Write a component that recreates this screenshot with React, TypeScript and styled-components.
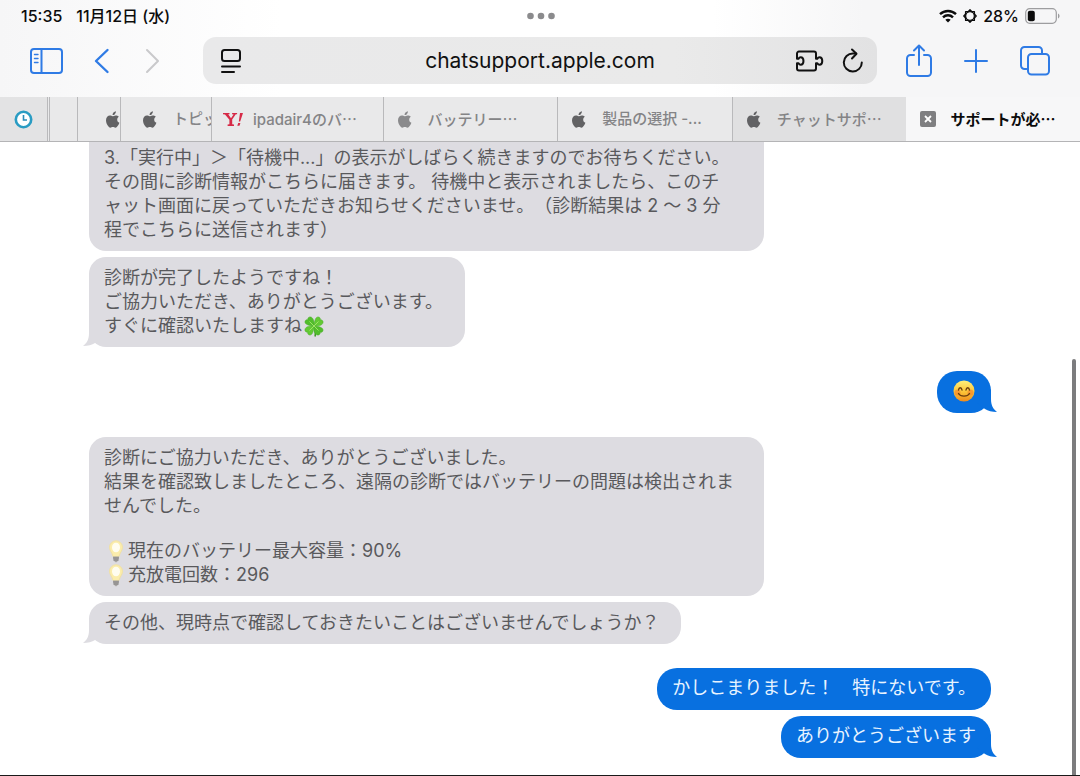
import React, { type ReactNode } from "react";
import styled, { createGlobalStyle, css } from "styled-components";

const GlobalStyle = createGlobalStyle`
  * { box-sizing: border-box; }
  html, body { margin: 0; }
  body {
    font-family: Inter, "Noto Sans CJK JP", sans-serif;
    color: #0c0c0c;
    background: #fff;
  }
  button { border: 0; padding: 0; background: none; font: inherit; color: inherit; display: flex; }
  svg { display: block; flex: none; }
`;

const Screen = styled.div`
  height: 100vh;
  display: flex;
  flex-direction: column;
  overflow: hidden;
  border-bottom: 1px solid #1a1a1a;
`;

const Chrome = styled.header`
  flex: none;
  background: linear-gradient(90deg, #f6f6f7 0%, #fff 26%, #fff 66%, #f6f6f7 80%);
  border-bottom: 1px solid #b4b4b6;
`;

const StatusBar = styled.div`
  height: 32px;
  padding: 0 20px 0 21px;
  display: grid;
  grid-template-columns: 1fr auto 1fr;
  align-items: center;
  font-size: 16px;
  line-height: 20px;
  font-weight: 500;
`;

const StatusLeft = styled.div`
  display: flex;
  align-items: baseline;
  gap: 14px;
  white-space: nowrap;
`;

const StatusRight = styled.div`
  display: flex;
  justify-content: flex-end;
  align-items: center;
  gap: 6px;
`;

const Toolbar = styled.nav`
  height: 65px;
  padding: 5px 29px 13px 28px;
  display: flex;
  align-items: center;
  color: #2f7be5;
`;

const NavButtons = styled.div`
  width: 175px;
  display: flex;
  align-items: center;
`;

const NavButton = styled.button<{ $width: number; $muted?: boolean }>`
  width: ${(p) => p.$width}px;
  color: ${(p) => (p.$muted ? "#c9c9cb" : "inherit")};
`;

const AddressBar = styled.div`
  flex: 1;
  height: 47px;
  padding: 0 12px 0 16px;
  display: flex;
  align-items: center;
  gap: 16px;
  border-radius: 13px;
  background: linear-gradient(90deg, #e9e9ea 0%, #eaeaea 70%, #e2e2e3 100%);
  color: #111;
`;

const AddressInput = styled.input`
  flex: 1;
  min-width: 0;
  padding: 0 0 0 42px;
  border: 0;
  outline: 0;
  background: none;
  font: 400 21px Inter, sans-serif;
  color: #111;
  text-align: center;
`;

const ActionButtons = styled.div`
  width: 174px;
  display: flex;
  align-items: center;
  justify-content: space-between;
  padding-left: 28px;
`;

const TabStrip = styled.div`
  height: 44px;
  display: flex;
`;

const Tab = styled.button<{ $width?: number; $active?: boolean; $shade?: string; $pad?: number }>`
  ${(p) => (p.$width ? css`flex: none; width: ${p.$width}px;` : css`flex: 1 1 0; min-width: 0;`)}
  padding-left: ${(p) => p.$pad ?? 14}px;
  align-items: center;
  gap: 10px;
  overflow: hidden;
  white-space: nowrap;
  font-size: 15px;
  line-height: 20px;
  font-weight: ${(p) => (p.$active ? 700 : 500)};
  color: ${(p) => (p.$active ? "#0c0c0c" : "#848486")};
  background: ${(p) => (p.$active ? "#f7f7f8" : p.$shade ?? "#e9e9ea")};
  border-right: ${(p) => (p.$active || p.$shade === "#e0e0e1" ? 0 : 1)}px solid #b9b9bb;
`;

const Favicon = styled.span`
  flex: none;
  width: 20px;
`;

const TabTitle = styled.span`
  flex: 1;
  min-width: 0;
  overflow: hidden;
  text-align: left;
`;

const WideDots = styled.span`
  font-family: "Noto Sans CJK JP", sans-serif;
`;

const PageArea = styled.main`
  flex: 1;
  min-height: 0;
  display: flex;
  justify-content: flex-end;
`;

const Conversation = styled.section`
  flex: 1;
  min-width: 0;
  display: flex;
  flex-direction: column;
  justify-content: flex-end;
  gap: 24px;
  padding: 0 81px 17px 89px;
  overflow: hidden;
`;

const ScrollTrack = styled.div`
  flex: none;
  width: 8px;
  padding-top: 217px;
  display: flex;
`;

const ScrollThumb = styled.div`
  width: 4px;
  border-radius: 2px 2px 0 0;
  background: #7c7c7e;
`;

const MessageGroup = styled.div<{ $mine?: boolean }>`
  flex: none;
  display: flex;
  flex-direction: column;
  align-items: ${(p) => (p.$mine ? "flex-end" : "flex-start")};
  gap: 6px;
`;

const BubbleBody = styled.div<{ $mine?: boolean; $wide?: boolean }>`
  position: relative;
  width: ${(p) => (p.$wide ? "calc(75% - 2px)" : "auto")};
  padding: ${(p) => (p.$mine ? "8px 15px 10px" : "9px 22px 9px 15px")};
  display: flex;
  flex-direction: column;
  gap: 21px;
  border-radius: ${(p) => (p.$mine ? 20 : 17)}px;
  background: ${(p) => (p.$mine ? "#0870e0" : "#dddce1")};
  color: ${(p) => (p.$mine ? "#e9f4ff" : "#59595c")};
  font-size: 18px;
  line-height: 24px;
  text-spacing-trim: space-all;
`;

const Paragraph = styled.p`
  margin: 0;
  white-space: pre;
`;

const Tail = styled.svg<{ $mine?: boolean }>`
  position: absolute;
  bottom: 0;
  ${(p) => (p.$mine ? css`right: -6px;` : css`left: -6px; transform: scaleX(-1);`)}
`;

const EmojiSlot = styled.span`
  display: inline-flex;
  width: 24px;
  height: 24px;
  align-items: center;
  justify-content: center;
  vertical-align: top;
`;

function Bubble({ mine, wide, tail, children }: { mine?: boolean; wide?: boolean; tail?: boolean; children: ReactNode }) {
  return (
    <BubbleBody $mine={mine} $wide={wide}>
      {children}
      {tail && (
        <Tail $mine={mine} width="24" height="24" viewBox="0 0 24 24" aria-hidden="true">
          <path d="M18 0v10c0 6 2 10 6 13-5 0-9-1-12-3L4 14Z" fill={mine ? "#0870e0" : "#dddce1"} />
        </Tail>
      )}
    </BubbleBody>
  );
}

function Apple({ color = "#626264" }: { color?: string }) {
  return (
    <Favicon>
      <svg width="14" height="17" viewBox="0 0 14 17" fill={color} aria-hidden="true">
        <path d="M9.9 0.2c.1 1-.3 2-.9 2.700-.6.8-1.500 1.300-2.400 1.200-.1-1 .3-2 .9-2.600C8.100.8 9.100.3 9.900.2ZM12.900 5.800c-1.100.7-1.700 1.600-1.700 2.900 0 1.500.9 2.600 2.200 3.100-.3 1-.8 1.900-1.400 2.800-.8 1.200-1.500 2.100-2.600 2.100-1 0-1.300-.6-2.500-.6s-1.600.6-2.500.6c-1.100 0-1.900-1-2.700-2.200C.6 12.900 0 11 0 9.200c0-3 1.900-4.700 3.900-4.700 1.100 0 2 .7 2.700.7.600 0 1.700-.8 3-.8 1.300 0 2.500.5 3.300 1.400Z" />
      </svg>
    </Favicon>
  );
}

function Smile() {
  return (
    <svg width="22" height="22" viewBox="0 0 22 22" role="img" aria-label="笑顔">
      <defs>
        <linearGradient id="face" x1="0" y1="0" x2="0" y2="1">
          <stop offset="0" stopColor="#fff07a" /><stop offset=".55" stopColor="#fcc437" /><stop offset="1" stopColor="#ef8a1c" />
        </linearGradient>
      </defs>
      <circle cx="11" cy="11" r="10.500" fill="url(#face)" />
      <circle cx="4.500" cy="12.500" r="3" fill="#f47a2a" opacity=".55" />
      <circle cx="17.500" cy="12.500" r="3" fill="#f47a2a" opacity=".55" />
      <path d="M5.500 10c.5-3 3-3 3.500 0M13 10c.5-3 3-3 3.500 0M5.500 13.500c2 3.500 9 3.500 11 0" fill="none" stroke="#6b3d0c" strokeWidth="1.400" strokeLinecap="round" />
    </svg>
  );
}

function Clover() {
  const leaf = "M11 11C6 10.500 1.500 9.500 2 6.500c.3-1.800 2-2 2.800-1.700C4.500 3 6 1.500 7.800 2 10.500 2.800 11.500 7 11 11Z";
  return (
    <svg width="22" height="22" viewBox="0 0 22 22" role="img" aria-label="四つ葉">
      <path d="M11 11c1 4 2 7 1 10.500" stroke="#3f9a26" strokeWidth="1.600" fill="none" />
      {[0, 90, 180, 270].map((a) => (
        <path key={a} d={leaf} fill={a % 180 ? "#62c934" : "#52bd2c"} stroke="#45ab24" strokeWidth=".5" transform={`rotate(${a} 11 11)`} />
      ))}
      <path d="M6.500 6.500l9 9M15.500 6.500l-9 9" stroke="#a5e66b" strokeWidth=".9" />
    </svg>
  );
}

function Bulb() {
  return (
    <svg width="16" height="23" viewBox="0 0 16 23" role="img" aria-label="電球">
      <path d="M8 .8a6.500 6.500 0 0 1 6.500 6.500c0 3.500-2.700 5.200-3.500 9.200H5C4.200 12.500 1.500 10.800 1.500 7.300A6.500 6.500 0 0 1 8 .8Z" fill="#fbedac" stroke="#f1e1a4" />
      <ellipse cx="8" cy="7.500" rx="4" ry="4.800" fill="#fffdf0" />
      <path d="M5 16.500h6l-.5 4L8 22.500l-2.500-2Z" fill="#a9a7a3" />
      <path d="M5 18h6M5.500 20h5" stroke="#77767a" strokeWidth=".7" />
    </svg>
  );
}

const stroke = { fill: "none", stroke: "currentColor", strokeWidth: 2, strokeLinecap: "round", strokeLinejoin: "round" } as const;

export default function App() {
  return (
    <Screen>
      <GlobalStyle />
      <Chrome>
        <StatusBar>
          <StatusLeft><span>15:35</span><span>11月12日 (水)</span></StatusLeft>
          <svg width="28" height="8" viewBox="0 0 28 8" fill="#8b8b8d" aria-hidden="true">
            <circle cx="3.500" cy="4" r="3.300" /><circle cx="14" cy="4" r="3.300" /><circle cx="24.500" cy="4" r="3.300" />
          </svg>
          <StatusRight>
            <svg width="18" height="14" viewBox="0 0 18 14" {...stroke} strokeWidth={2.4} strokeLinecap="butt" aria-hidden="true">
              <path d="M1 5.200c4.500-4.300 11.500-4.300 16 0M4 8.300c2.800-2.700 7.200-2.700 10 0" />
              <path d="M9 13.500 6.300 10.800c1.500-1.400 3.900-1.400 5.400 0Z" fill="currentColor" stroke="none" />
            </svg>
            <svg width="14" height="14" viewBox="0 0 16 16" {...stroke} strokeWidth={1.5} aria-hidden="true">
              <circle cx="8" cy="8" r="5" strokeWidth="1.500" />
              {[0, 45, 90, 135, 180, 225, 270, 315].map((a) => (
                <path key={a} d="M5.800 3 8 .9 10.200 3" transform={`rotate(${a} 8 8)`} />
              ))}
            </svg>
            <span>28%</span>
            <svg width="35" height="16" viewBox="0 0 35 16" aria-hidden="true">
              <rect x=".7" y=".7" width="30.600" height="14.600" rx="4" fill="none" stroke="#9d9d9f" strokeWidth="1.200" />
              <rect x="2.800" y="2.800" width="7" height="10.400" rx="2" fill="#0c0c0c" />
              <path d="M33 5.500c2 .8 2 4.200 0 5Z" fill="#9d9d9f" />
            </svg>
          </StatusRight>
        </StatusBar>

        <Toolbar aria-label="ツールバー">
          <NavButtons>
            <NavButton $width={65} aria-label="サイドバー">
              <svg width="36" height="28" viewBox="0 0 36 28" {...stroke}>
                <rect x="3" y="2" width="31" height="24" rx="3" />
                <path d="M13.500 2v24" /><path d="M6.500 7.500h3.500M6.500 11.500h3.500M6.500 15.500h3.500" strokeWidth="1.400" />
              </svg>
            </NavButton>
            <NavButton $width={52} aria-label="戻る">
              <svg width="18" height="26" viewBox="0 0 18 26" {...stroke} strokeWidth={2.4}><path d="M14.500 2 3 13l11.500 11" /></svg>
            </NavButton>
            <NavButton $width={18} $muted aria-label="進む">
              <svg width="18" height="26" viewBox="0 0 18 26" {...stroke}><path d="m2 2 11 11L2 24" /></svg>
            </NavButton>
          </NavButtons>
          <AddressBar>
            <button aria-label="ページメニュー">
              <svg width="24" height="26" viewBox="0 0 24 26" {...stroke}>
                <rect x="3" y="2" width="18" height="11" rx="2.500" /><path d="M3 18.500h18M3 24h12" />
              </svg>
            </button>
            <AddressInput aria-label="アドレス" defaultValue="chatsupport.apple.com" />
            <button aria-label="機能拡張">
              <svg width="30" height="24" viewBox="0 0 30 24" {...stroke}>
                <path d="M4 2.500h15a2 2 0 0 1 2 2v5.300h1.300c.5-1 1.200-1.500 2.200-1.500 3.700 0 3.700 7.400 0 7.400-1 0-1.700-.5-2.200-1.500H21v5.300a2 2 0 0 1-2 2H4a2 2 0 0 1-2-2v-5.300h1.500c.5 1 1.300 1.500 2.200 1.500 3.700 0 3.700-7.400 0-7.400-.9 0-1.700.5-2.200 1.500H2V4.500a2 2 0 0 1 2-2Z" />
              </svg>
            </button>
            <button aria-label="再読み込み">
              <svg width="24" height="26" viewBox="0 0 24 26" {...stroke}>
                <path d="M20.800 14.500A9 9 0 1 1 12 5.500h3" /><path d="m11 1.500 4.500 4.200L11 10.500" />
              </svg>
            </button>
          </AddressBar>
          <ActionButtons>
            <button aria-label="共有">
              <svg width="28" height="34" viewBox="0 0 28 34" {...stroke}>
                <path d="M9 11H5.500A3.500 3.500 0 0 0 2 14.500v14A3.500 3.500 0 0 0 5.500 32h17a3.500 3.500 0 0 0 3.500-3.500v-14a3.500 3.500 0 0 0-3.500-3.500H19M14 21V2M9 6.500 14 1.500l5 5" />
              </svg>
            </button>
            <button aria-label="新規タブ">
              <svg width="24" height="24" viewBox="0 0 24 24" {...stroke}><path d="M12 1v22M1 12h22" /></svg>
            </button>
            <button aria-label="タブ一覧">
              <svg width="32" height="32" viewBox="0 0 32 32" {...stroke}>
                <path d="M7.500 24H5.500A3.500 3.500 0 0 1 2 20.500v-15A3.500 3.500 0 0 1 5.500 2h14A3.500 3.500 0 0 1 23 5.500V8" />
                <rect x="9" y="9" width="21" height="20.500" rx="3.500" />
              </svg>
            </button>
          </ActionButtons>
        </Toolbar>

        <TabStrip role="tablist">
          <Tab role="tab" $width={48} $shade="#e3e3e4" aria-label="時計">
            <svg width="19" height="19" viewBox="0 0 19 19">
              <circle cx="9.500" cy="9.500" r="7.700" fill="#fff" stroke="#2a9cc3" strokeWidth="2.600" />
              <path d="M9.500 5v5h3.500" fill="none" stroke="#2a8cb8" strokeWidth="1.600" />
            </svg>
          </Tab>
          <Tab role="tab" $width={2} $pad={0} aria-label="タブ" />
          <Tab role="tab" $width={28} $pad={0} aria-label="タブ" />
          <Tab role="tab" $width={43} $pad={28} aria-label="Apple"><Apple /></Tab>
          <Tab role="tab" $width={91} $pad={22}><Apple /><TabTitle>トピッ</TabTitle></Tab>
          <Tab role="tab" $pad={11}>
            <Favicon>
              <svg width="20" height="13" viewBox="0 0 20 13" fill="#d62a47" aria-hidden="true">
                <path d="M0 0h6.500v1.300H5.200L8 5.200l2.600-3.600-1.500-.3V0h5v1.300h-1.300L9.200 6.600v4.700l1.800.3V13H4.600v-1.400l1.800-.3V6.800L2 1.500 0 1.300ZM17 0h3l-2.800 8.500h-1.400ZM15.200 10h2.200l-.9 2.800h-2.200Z" />
              </svg>
            </Favicon>
            <TabTitle>ipadair4のバ<WideDots>…</WideDots></TabTitle>
          </Tab>
          <Tab role="tab"><Apple color="#8a8a8c" /><TabTitle>バッテリー<WideDots>…</WideDots></TabTitle></Tab>
          <Tab role="tab"><Apple /><TabTitle>製品の選択 -...</TabTitle></Tab>
          <Tab role="tab" $shade="#e0e0e1"><Apple /><TabTitle>チャットサポ<WideDots>…</WideDots></TabTitle></Tab>
          <Tab role="tab" $active aria-selected="true">
            <Favicon>
              <svg width="16" height="16" viewBox="0 0 16 16" aria-hidden="true">
                <rect width="16" height="16" rx="2" fill="#7f7f81" /><path d="m5 5 6 6m0-6-6 6" stroke="#fff" strokeWidth="1.800" />
              </svg>
            </Favicon>
            <TabTitle>サポートが必<WideDots>…</WideDots></TabTitle>
          </Tab>
        </TabStrip>
      </Chrome>

      <PageArea>
        <Conversation>
          <MessageGroup>
            <Bubble wide>
              <Paragraph>{"意する」を選択\n3.「実行中」＞「待機中...」の表示がしばらく続きますのでお待ちください。\nその間に診断情報がこちらに届きます。 待機中と表示されましたら、このチ\nャット画面に戻っていただきお知らせくださいませ。（診断結果は 2 〜 3 分\n程でこちらに送信されます）"}</Paragraph>
            </Bubble>
            <Bubble tail>
              <Paragraph>{"診断が完了したようですね！\nご協力いただき、ありがとうございます。\nすぐに確認いたしますね"}<EmojiSlot><Clover /></EmojiSlot></Paragraph>
            </Bubble>
          </MessageGroup>
          <MessageGroup $mine>
            <Bubble mine tail><EmojiSlot><Smile /></EmojiSlot></Bubble>
          </MessageGroup>
          <MessageGroup>
            <Bubble wide>
              <Paragraph>{"診断にご協力いただき、ありがとうございました。\n結果を確認致しましたところ、遠隔の診断ではバッテリーの問題は検出されま\nせんでした。"}</Paragraph>
              <Paragraph>
                <EmojiSlot><Bulb /></EmojiSlot>{"現在のバッテリー最大容量：90%\n"}
                <EmojiSlot><Bulb /></EmojiSlot>充放電回数：296
              </Paragraph>
            </Bubble>
            <Bubble tail><Paragraph>その他、現時点で確認しておきたいことはございませんでしょうか？</Paragraph></Bubble>
          </MessageGroup>
          <MessageGroup $mine>
            <Bubble mine><Paragraph>かしこまりました！　特にないです。</Paragraph></Bubble>
            <Bubble mine tail><Paragraph>ありがとうございます</Paragraph></Bubble>
          </MessageGroup>
        </Conversation>
        <ScrollTrack><ScrollThumb /></ScrollTrack>
      </PageArea>
    </Screen>
  );
}
